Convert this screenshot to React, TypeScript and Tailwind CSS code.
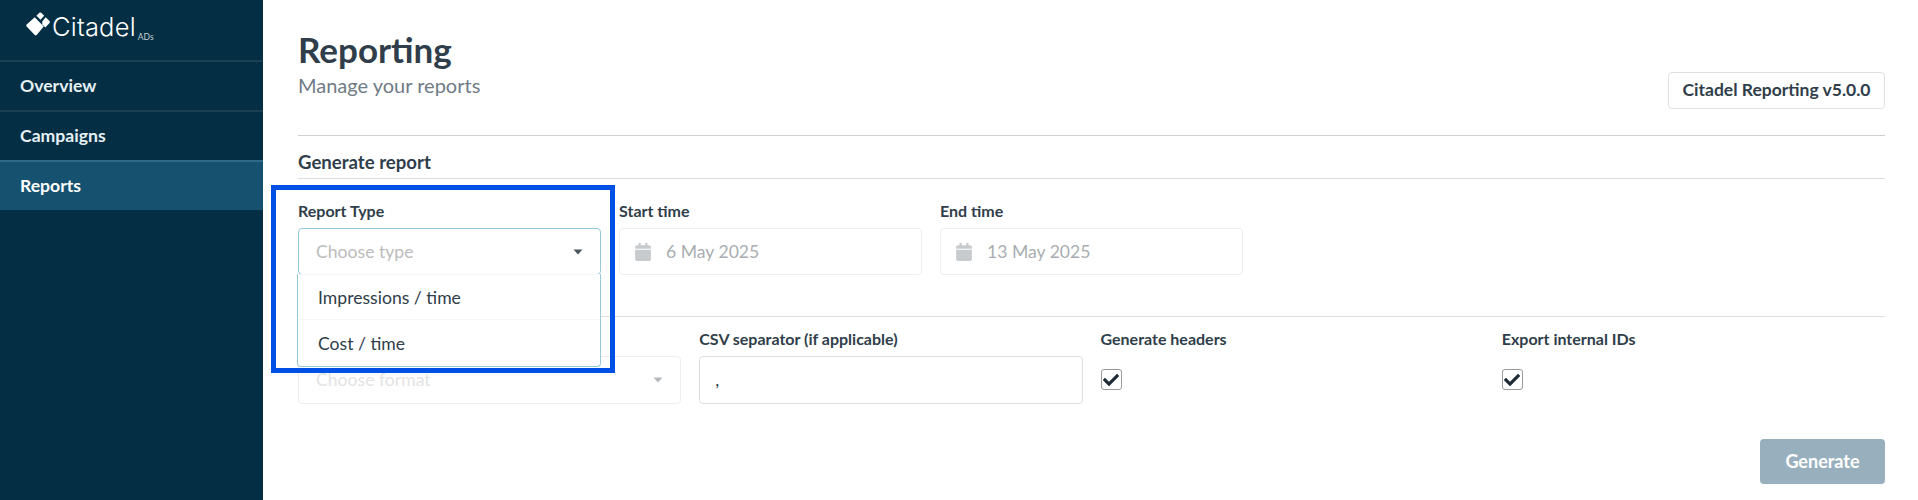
import { FaCalendar, FaCheck } from "react-icons/fa";

const navItems = ["Overview", "Campaigns", "Reports"];

function Caret({ faded }: { faded?: boolean }) {
  return (
    <svg width="10" height="6" viewBox="0 0 10 6" className={faded ? "text-[#b5b8bb]" : "text-[#4a5560]"}>
      <path d="M0.5 0.5h9L5 5.5z" fill="currentColor" />
    </svg>
  );
}

function Logo() {
  return (
    <div className="flex h-[60px] items-start pl-[25px] pt-[12px] text-white">
      <svg width="26" height="25" viewBox="0 0 26 26" className="shrink-0">
        <path d="M9.6 5.4 L19 15 L11.6 24 Q10.6 25 9.6 24 L1.2 15 Q0.2 14 1.2 13 Z" fill="#fff" />
        <path d="M11.4 3.8 L14.4 0.8 Q15.4 0 16.4 0.8 L19.4 3.8 L15.6 8 Z" fill="#fff" />
        <path d="M17.4 9.8 L21 5.4 L25 9.4 Q25.8 10.4 25 11.4 L20.6 16 L17.4 12.8 Z" fill="#fff" />
      </svg>
      <span className="ml-[1px] font-['Inter',sans-serif] text-[25.5px] font-light leading-[30px] tracking-[0.2px]">Citadel</span>
      <span className="mt-[21px] ml-[2px] font-['Lato',sans-serif] text-[8.5px] leading-[8px] text-[#c6d0d6]">ADs</span>
    </div>
  );
}

function FieldLabel({ children }: { children: string }) {
  return <div className="mb-[7px] h-[21px] text-[16px] font-bold leading-[21px] text-[#2f3e4a]">{children}</div>;
}

function DateField({ label, value }: { label: string; value: string }) {
  return (
    <div>
      <FieldLabel>{label}</FieldLabel>
      <div className="flex h-[47px] items-center rounded-[4px] border border-[#eceef0] pl-[14px]">
        <FaCalendar className="size-[18px] text-[#c8cbce]" />
        <span className="ml-[14px] pt-[1px] text-[17.6px] text-[#a9adb1]">{value}</span>
      </div>
    </div>
  );
}

function CheckField({ label }: { label: string }) {
  return (
    <div>
      <FieldLabel>{label}</FieldLabel>
      <div className="mt-[20px] flex h-[21px] w-[21px] items-center justify-center rounded-[3px] border border-[#9a9a9a]">
        <FaCheck className="size-[16px] text-[#1d2b36]" />
      </div>
    </div>
  );
}

export default function App() {
  return (
    <div className="flex h-[500px] overflow-hidden bg-white font-['Lato',sans-serif]">
      <aside className="h-full w-[263px] shrink-0 bg-[#032e43]">
        <Logo />
        <nav>
          {navItems.map((item) => (
            <div
              key={item}
              className={`flex h-[50px] items-center border-t-2 pl-[20px] text-[17.6px] font-bold ${
                item === "Reports" ? "border-[#2f6a87] bg-[#16526f] text-white" : "border-[#1a4052] text-[#e6f0f5]"
              }`}
            >
              {item}
            </div>
          ))}
        </nav>
      </aside>

      <main className="min-w-0 flex-1 pl-[35px] pr-[33px] pt-[27px]">
        <div className="relative h-[109px] border-b border-[#cfcfcf]">
          <h1 className="text-[35px] font-bold leading-[44px] text-[#2f3e4a]">Reporting</h1>
          <p className="mt-[2px] text-[20px] leading-[24px] text-[#707b85]">Manage your reports</p>
          <div className="absolute right-0 top-[45px] flex h-[37px] w-[217px] items-center justify-center rounded-[4px] border border-[#dfe1e3] text-[17.5px] font-bold text-[#2f3e4a]">
            Citadel Reporting v5.0.0
          </div>
        </div>

        <h2 className="flex h-[43px] items-center border-b border-[#dcdcdc] pt-[11px] text-[18.6px] font-bold text-[#2f3e4a]">
          Generate report
        </h2>

        <div className="grid h-[138px] grid-cols-5 gap-x-[18px] border-b border-[#dfdfdf] pt-[21px]">
          <div className="relative">
            <FieldLabel>Report Type</FieldLabel>
            <div className="flex h-[47px] items-center justify-between rounded-[4px] border border-[#97c9dc] pl-[17px] pr-[17px]">
              <span className="pt-[1px] text-[17.6px] text-[#bcbcbc]">Choose type</span>
              <Caret />
            </div>
            <div className="absolute left-[-1px] top-[74px] z-20 w-[304px] rounded-b-[4px] border border-t-0 border-[#97c9dc] bg-white text-[17.6px] text-[#2f3e4a]">
              <div className="flex h-[46px] items-center border-y border-[#f6f7f8] pl-[20px] pt-[2px]">Impressions / time</div>
              <div className="flex h-[46px] items-center pl-[20px] pt-[2px]">Cost / time</div>
            </div>
            <div className="pointer-events-none absolute left-[-27px] top-[-15px] z-30 h-[188px] w-[344px] border-[5px] border-[#0050e6]" />
          </div>
          <DateField label="Start time" value="6 May 2025" />
          <DateField label="End time" value="13 May 2025" />
        </div>

        <div className="grid grid-cols-4 gap-x-[18px] pt-[11px]">
          <div>
            <FieldLabel>Format</FieldLabel>
            <div className="flex h-[48px] items-center justify-between rounded-[4px] border border-[#eceef0] pl-[17px] pr-[17px]">
              <span className="text-[17.6px] text-[#e3e3e3]">Choose format</span>
              <Caret faded />
            </div>
          </div>
          <div>
            <FieldLabel>CSV separator (if applicable)</FieldLabel>
            <div className="flex h-[48px] items-center rounded-[4px] border border-[#dcdfe1] pl-[15px] text-[17.6px] text-[#2f3e4a]">,</div>
          </div>
          <CheckField label="Generate headers" />
          <CheckField label="Export internal IDs" />
        </div>

        <div className="mt-[35px] flex justify-end">
          <div className="flex h-[45px] w-[125px] items-center justify-center rounded-[4px] bg-[#98b0be] text-[18px] font-bold text-white">
            Generate
          </div>
        </div>
      </main>
    </div>
  );
}
